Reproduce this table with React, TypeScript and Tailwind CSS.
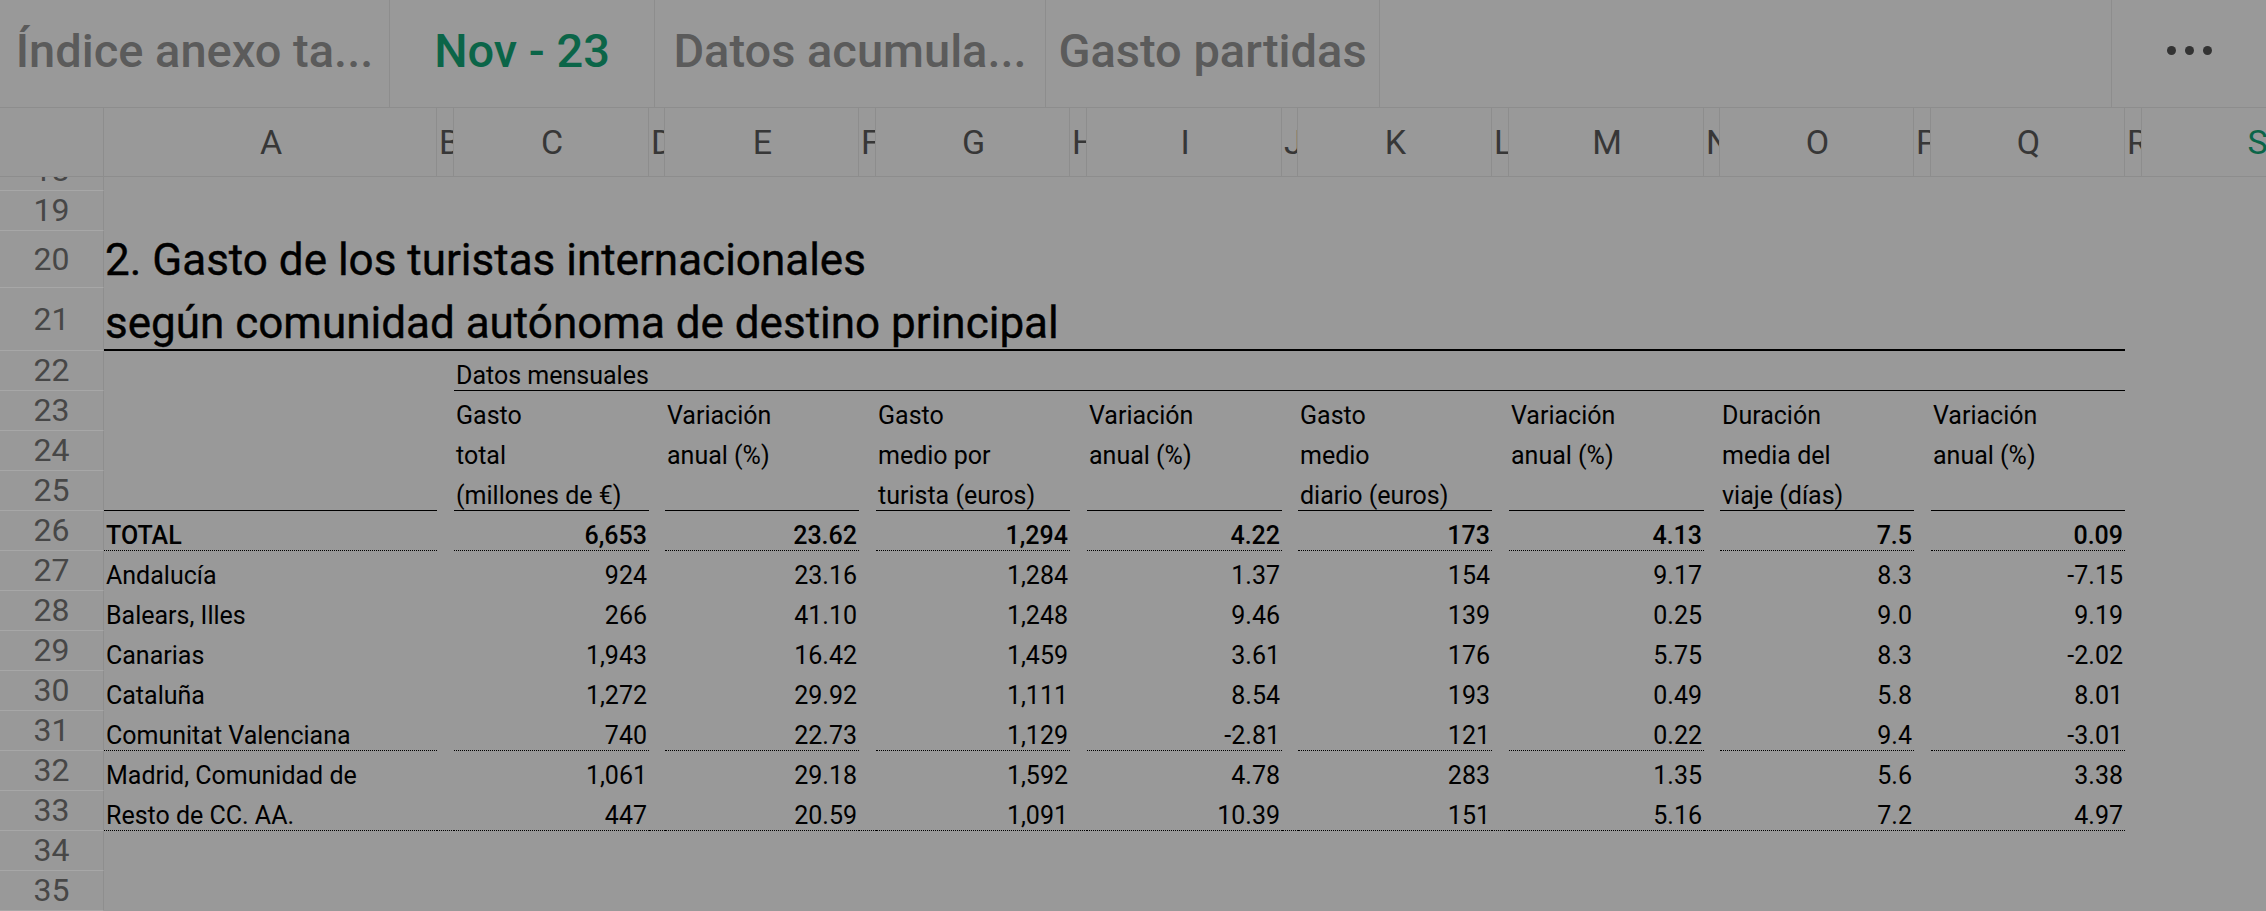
import { Fragment, type ReactNode } from "react";

const grid =
    "grid grid-cols-[104px_333px_17px_195px_16px_194px_17px_194px_17px_195px_16px_194px_17px_195px_16px_194px_17px_194px_17px_230px]";

const borderCls = {
    none: "border-b border-transparent",
    solid: "border-b border-black",
    dotted: "border-b border-dotted border-black",
};

type Border = keyof typeof borderCls;

const letters = ["A", "B", "C", "D", "E", "F", "G", "H", "I", "J", "K", "L", "M", "N", "O", "P", "Q", "R", "S"];

const heads: string[][] = [
    ["Gasto", "total", "(millones de €)"],
    ["Variación", "anual (%)", ""],
    ["Gasto", "medio por", "turista (euros)"],
    ["Variación", "anual (%)", ""],
    ["Gasto", "medio", "diario (euros)"],
    ["Variación", "anual (%)", ""],
    ["Duración", "media del", "viaje (días)"],
    ["Variación", "anual (%)", ""],
];

const data: { label: string; values: string[] }[] = [
    { label: "TOTAL", values: ["6,653", "23.62", "1,294", "4.22", "173", "4.13", "7.5", "0.09"] },
    { label: "Andalucía", values: ["924", "23.16", "1,284", "1.37", "154", "9.17", "8.3", "-7.15"] },
    { label: "Balears, Illes", values: ["266", "41.10", "1,248", "9.46", "139", "0.25", "9.0", "9.19"] },
    { label: "Canarias", values: ["1,943", "16.42", "1,459", "3.61", "176", "5.75", "8.3", "-2.02"] },
    { label: "Cataluña", values: ["1,272", "29.92", "1,111", "8.54", "193", "0.49", "5.8", "8.01"] },
    { label: "Comunitat Valenciana", values: ["740", "22.73", "1,129", "-2.81", "121", "0.22", "9.4", "-3.01"] },
    { label: "Madrid, Comunidad de", values: ["1,061", "29.18", "1,592", "4.78", "283", "1.35", "5.6", "3.38"] },
    { label: "Resto de CC. AA.", values: ["447", "20.59", "1,091", "10.39", "151", "5.16", "7.2", "4.97"] },
];

function Row({ n, h, children }: { n: number; h: string; children?: ReactNode }) {
    return (
        <div className={`${grid} ${h}`}>
            <div className="flex items-center justify-center border-r border-b border-r-[#8e8e8e] border-b-[#a7a7a7] text-[32px] text-[#474747]">
                {n}
            </div>
            {children}
        </div>
    );
}

function HeadRow({ n, line, border }: { n: number; line: number; border: Border }) {
    const b = borderCls[border];
    return (
        <Row n={n} h="h-[40px]">
            <div className={b} />
            {heads.map((h, i) => (
                <Fragment key={i}>
                    <div className={borderCls.none} />
                    <div className={`flex items-end whitespace-nowrap px-[2px] ${b}`}>{h[line]}</div>
                </Fragment>
            ))}
        </Row>
    );
}

function DataRow({
    n,
    label,
    values,
    border,
    gaps,
    bold,
}: {
    n: number;
    label: string;
    values: string[];
    border: Border;
    gaps?: boolean;
    bold?: boolean;
}) {
    const b = borderCls[border];
    const g = gaps ? b : borderCls.none;
    return (
        <Row n={n} h="h-[40px]">
            <div className={`flex items-end whitespace-nowrap px-[2px] ${b} ${bold ? "font-medium" : ""}`}>{label}</div>
            {values.map((v, i) => (
                <Fragment key={i}>
                    <div className={g} />
                    <div className={`flex items-end justify-end px-[2px] ${b} ${bold ? "font-medium" : ""}`}>{v}</div>
                </Fragment>
            ))}
        </Row>
    );
}

function Tab({ label, w, active }: { label: string; w: string; active?: boolean }) {
    return (
        <div
            className={`flex shrink-0 items-center justify-center whitespace-nowrap border-r border-[#8d8d8d] pb-[5px] text-[47px] font-medium ${w} ${
                active ? "text-[#0b6548]" : "text-[#5b5b5b]"
            }`}
        >
            {label}
        </div>
    );
}

export default function App() {
    return (
        <div className="h-[911px] w-[2266px] overflow-hidden bg-[#999999] font-['Roboto',sans-serif]">
            {/* sheet tabs */}
            <div className="flex h-[108px] border-b border-[#8d8d8d]">
                <Tab label="Índice anexo ta..." w="w-[390px]" />
                <Tab label="Nov - 23" w="w-[265px]" active />
                <Tab label="Datos acumula..." w="w-[391px]" />
                <Tab label="Gasto partidas" w="w-[334px]" />
                <div className="flex-1 border-r border-[#8d8d8d]" />
                <div className="flex w-[154px] items-center justify-center gap-[9px] pb-[6px]">
                    <span className="h-[9px] w-[9px] rounded-full bg-[#333333]" />
                    <span className="h-[9px] w-[9px] rounded-full bg-[#333333]" />
                    <span className="h-[9px] w-[9px] rounded-full bg-[#333333]" />
                </div>
            </div>

            {/* column letters */}
            <div className={`${grid} h-[69px] border-b border-[#8d8d8d] text-[34px] text-[#373737]`}>
                <div className="border-r border-[#8d8d8d]" />
                {letters.map((l) => (
                    <div
                        key={l}
                        className={`overflow-hidden whitespace-nowrap border-r border-[#8d8d8d] pl-[2px] text-center leading-[68px] ${
                            l === "S" ? "text-[#0b6548]" : ""
                        }`}
                    >
                        {l}
                    </div>
                ))}
            </div>

            {/* sheet body */}
            <div className="h-[734px] overflow-hidden text-[25px] leading-[29px] text-black">
                <div className="-mt-[26px]">
                    <Row n={18} h="h-[40px]" />
                    <Row n={19} h="h-[40px]" />
                    <Row n={20} h="h-[57px]">
                        <div className="col-span-17 flex items-end whitespace-nowrap px-[1px] pb-[2px] text-[44px] leading-[52px] [-webkit-text-stroke:0.4px_black]">
                            2. Gasto de los turistas internacionales
                        </div>
                    </Row>
                    <Row n={21} h="h-[63px]">
                        <div className="col-span-17 flex items-end whitespace-nowrap border-b-2 border-black px-[1px] text-[44px] leading-[52px] [-webkit-text-stroke:0.4px_black]">
                            según comunidad autónoma de destino principal
                        </div>
                    </Row>
                    <Row n={22} h="h-[40px]">
                        <div className={borderCls.none} />
                        <div className={borderCls.none} />
                        <div className={`col-span-15 flex items-end px-[2px] ${borderCls.solid}`}>Datos mensuales</div>
                    </Row>
                    <HeadRow n={23} line={0} border="none" />
                    <HeadRow n={24} line={1} border="none" />
                    <HeadRow n={25} line={2} border="solid" />
                    {data.map((r, i) => (
                        <DataRow
                            key={r.label}
                            n={26 + i}
                            label={r.label}
                            values={r.values}
                            bold={i === 0}
                            border={i === 0 || i === 5 || i === 7 ? "dotted" : "none"}
                            gaps={i === 7}
                        />
                    ))}
                    <Row n={34} h="h-[40px]" />
                    <Row n={35} h="h-[40px]" />
                </div>
            </div>
        </div>
    );
}
